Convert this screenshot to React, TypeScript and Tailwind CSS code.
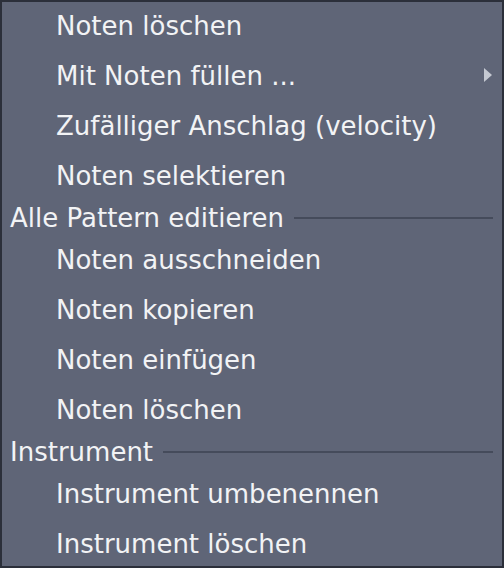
const font = { fontFamily: '"DejaVu Sans", sans-serif' }

function Item({ label, submenu }: { label: string; submenu?: boolean }) {
  return (
    <div className="flex h-[50px] items-center pl-[56px] pr-[12px] pt-[1px]">
      <span className="flex-1 text-[26px] leading-none text-[#f2f3f5]">{label}</span>
      {submenu && (
        <svg width="8" height="14" viewBox="0 0 8 14" className="mb-[1px]">
          <path d="M0 0 L8 7 L0 14 Z" fill="#c5c9d2" />
        </svg>
      )}
    </div>
  )
}

function Header({ label }: { label: string }) {
  return (
    <div className="flex h-[34px] items-center pl-[10px] pr-[11px] pt-[1px]">
      <span className="text-[26px] leading-none text-[#f2f3f5]">{label}</span>
      <div className="ml-[10px] h-[2px] flex-1 bg-[#454b5b]" />
    </div>
  )
}

export default function App() {
  return (
    <div
      className="flex h-[568px] w-[504px] flex-col bg-[#5f6577] shadow-[inset_0_0_0_2px_#2b2f3a]"
      style={font}
    >
      <Item label="Noten löschen" />
      <Item label="Mit Noten füllen ..." submenu />
      <Item label="Zufälliger Anschlag (velocity)" />
      <Item label="Noten selektieren" />
      <Header label="Alle Pattern editieren" />
      <Item label="Noten ausschneiden" />
      <Item label="Noten kopieren" />
      <Item label="Noten einfügen" />
      <Item label="Noten löschen" />
      <Header label="Instrument" />
      <Item label="Instrument umbenennen" />
      <Item label="Instrument löschen" />
    </div>
  )
}
